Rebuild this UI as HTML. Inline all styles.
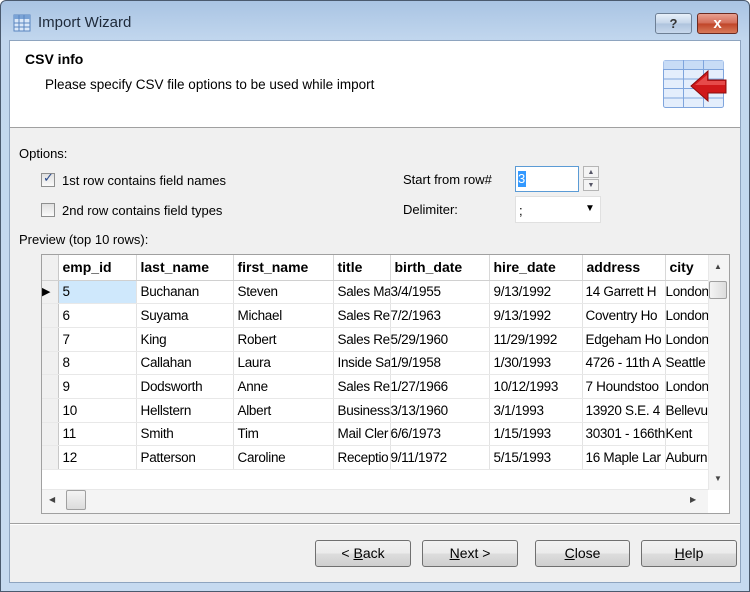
<!DOCTYPE html>
<html><head><style>
*{margin:0;padding:0;box-sizing:border-box}
body{width:750px;height:592px;background:#fff;font-family:"Liberation Sans",sans-serif;font-size:13px;color:#000;position:relative;overflow:hidden}
.abs{position:absolute}
#frame{left:0;top:0;width:750px;height:592px;background:linear-gradient(#a9c4e3,#c2d7ee 40px,#c6daf0);border:1px solid #4a5a6e;border-radius:6px 6px 0 0}
#client{left:9px;top:40px;width:732px;height:543px;background:#f0f0f0;border:1px solid #8ea4bf}
#hdr{left:10px;top:41px;width:730px;height:87px;background:#fff;border-bottom:1px solid #a0a0a0}
.t{position:absolute;white-space:nowrap}
.btn{position:absolute;height:27px;border:1px solid #707070;border-radius:3px;background:linear-gradient(#f2f2f2,#ebebeb 50%,#dddddd 51%,#cfcfcf);text-align:center;line-height:25px;font-size:14px}
.cb{position:absolute;width:14px;height:14px;border:1px solid #8e8f8f;background:linear-gradient(#e0e0e0,#fafafa)}
table{border-collapse:collapse;position:absolute;left:42px;top:255px;table-layout:fixed;width:666px}
td,th{height:23.7px;padding:0 0 0 4px;border-right:1px solid #e3e3e3;border-bottom:1px solid #e8e8e8;overflow:hidden;white-space:nowrap;text-align:left;font-weight:normal;font-size:13.5px;letter-spacing:-0.3px}
th{height:25px;font-weight:bold;font-size:14px;background:#fff;border-right:1px solid #d8d8d8;border-bottom:1px solid #d0d0d0;letter-spacing:0}
td.rh,th.rh{background:#f0f0f0;border-right:1px solid #c8c8c8;padding:0}
</style></head><body>
<div id="frame" class="abs"></div>
<svg class="abs" style="left:13px;top:14px" width="18" height="18"><rect x="1" y="1" width="16" height="16" fill="#dbe8f8" stroke="#5a86c0"/><rect x="1" y="1" width="16" height="4" fill="#7aa3d6"/><path d="M1 9h16M1 13h16M6 1v16M11 1v16" stroke="#5a86c0"/></svg>
<div class="t" style="left:38px;top:14px;font-size:15px;color:#1e2a3a">Import Wizard</div>
<div class="abs" style="left:655px;top:13px;width:37px;height:21px;border:1px solid #6d7f95;border-radius:3px;background:linear-gradient(#e8f0fa,#c3d4e8 50%,#aec3dd 51%,#c7d8ec);text-align:center;font-weight:bold;color:#333;line-height:19px">?</div>
<div class="abs" style="left:697px;top:13px;width:41px;height:21px;border:1px solid #6b2a20;border-radius:3px;background:linear-gradient(#e8a090,#d26a55 50%,#c04428 51%,#d87a5a);text-align:center;font-weight:bold;color:#fff;line-height:19px;font-size:15px">x</div>
<div id="client" class="abs"></div>
<div id="hdr" class="abs"></div>
<div class="t" style="left:25px;top:51px;font-weight:bold;font-size:14px">CSV info</div>
<div class="t" style="left:45px;top:77px;font-size:13.5px">Please specify CSV file options to be used while import</div>
<svg class="abs" style="left:662px;top:59px" width="66" height="50">
<rect x="1.5" y="1.5" width="60" height="47" rx="2" fill="#e4eefc" stroke="#7fa5dd"/>
<rect x="1.5" y="1.5" width="60" height="9" fill="#c8dcf6"/>
<path d="M1.5 10.5h60M1.5 20h60M1.5 29.5h60M1.5 39h60M21.5 1.5v47M41.5 1.5v47" stroke="#7fa5dd"/>
<path d="M29 27 L46 12 L46 21 L64 21 L64 34 L46 34 L46 42 Z" fill="#d0181a" stroke="#8a0c0c"/>
<path d="M33 26 L45 16 L45 22 L63 22 L63 26 Z" fill="#f06060" opacity=".7"/>
</svg>
<div class="t" style="left:19px;top:146px">Options:</div>
<div class="cb" style="left:41px;top:173px"></div><div class="t" style="left:43px;top:170px;font-size:13px;color:#2a4a8a">✓</div>
<div class="t" style="left:62px;top:173px">1st row contains field names</div>
<div class="cb" style="left:41px;top:203px"></div>
<div class="t" style="left:62px;top:203px">2nd row contains field types</div>
<div class="t" style="left:403px;top:172px">Start from row#</div>
<div class="abs" style="left:515px;top:166px;width:64px;height:26px;background:#fff;border:1px solid #5b9bd5"></div>
<div class="abs" style="left:518px;top:171px;width:8px;height:16px;background:#3399ff;color:#fff;line-height:16px">3</div>
<div class="abs" style="left:583px;top:166px;width:16px;height:12px;border:1px solid #b5b5b5;background:#f4f4f4;font-size:7px;text-align:center;color:#556;line-height:11px">▲</div>
<div class="abs" style="left:583px;top:179px;width:16px;height:12px;border:1px solid #b5b5b5;background:#f4f4f4;font-size:7px;text-align:center;color:#556;line-height:11px">▼</div>
<div class="t" style="left:403px;top:202px">Delimiter:</div>
<div class="abs" style="left:515px;top:196px;width:86px;height:27px;background:#fff;border:1px solid #e0e0e0"></div>
<div class="t" style="left:519px;top:203px">;</div>
<div class="t" style="left:585px;top:203px;font-size:10px">▼</div>
<div class="t" style="left:19px;top:232px">Preview (top 10 rows):</div>
<div class="abs" style="left:41px;top:254px;width:689px;height:260px;background:#fff;border:1px solid #a0a0a0"></div>
<table>
<colgroup><col style="width:16px"><col style="width:78px"><col style="width:97px"><col style="width:100px"><col style="width:57px"><col style="width:99px"><col style="width:93px"><col style="width:83px"><col style="width:43px"></colgroup>
<tr><th class="rh"></th><th>emp_id</th><th>last_name</th><th>first_name</th><th>title</th><th>birth_date</th><th>hire_date</th><th>address</th><th>city</th></tr>
<tr><td class="rh" style="font-size:11px">▶</td><td style="background:#cfe8fc">5</td><td>Buchanan</td><td>Steven</td><td>Sales Ma</td><td style="padding:0">3/4/1955</td><td>9/13/1992</td><td style="padding-left:3px">14 Garrett H</td><td style="padding:0">London</td></tr>
<tr><td class="rh"></td><td>6</td><td>Suyama</td><td>Michael</td><td>Sales Re</td><td style="padding:0">7/2/1963</td><td>9/13/1992</td><td style="padding-left:3px">Coventry Ho</td><td style="padding:0">London</td></tr>
<tr><td class="rh"></td><td>7</td><td>King</td><td>Robert</td><td>Sales Re</td><td style="padding:0">5/29/1960</td><td>11/29/1992</td><td style="padding-left:3px">Edgeham Ho</td><td style="padding:0">London</td></tr>
<tr><td class="rh"></td><td>8</td><td>Callahan</td><td>Laura</td><td>Inside Sa</td><td style="padding:0">1/9/1958</td><td>1/30/1993</td><td style="padding-left:3px">4726 - 11th A</td><td style="padding:0">Seattle</td></tr>
<tr><td class="rh"></td><td>9</td><td>Dodsworth</td><td>Anne</td><td>Sales Re</td><td style="padding:0">1/27/1966</td><td>10/12/1993</td><td style="padding-left:3px">7 Houndstoo</td><td style="padding:0">London</td></tr>
<tr><td class="rh"></td><td>10</td><td>Hellstern</td><td>Albert</td><td>Business</td><td style="padding:0">3/13/1960</td><td>3/1/1993</td><td style="padding-left:3px">13920 S.E. 4</td><td style="padding:0">Bellevue</td></tr>
<tr><td class="rh"></td><td>11</td><td>Smith</td><td>Tim</td><td>Mail Cler</td><td style="padding:0">6/6/1973</td><td>1/15/1993</td><td style="padding-left:3px">30301 - 166th</td><td style="padding:0">Kent</td></tr>
<tr><td class="rh"></td><td>12</td><td>Patterson</td><td>Caroline</td><td>Receptio</td><td style="padding:0">9/11/1972</td><td>5/15/1993</td><td style="padding-left:3px">16 Maple Lar</td><td style="padding:0">Auburn</td></tr>
</table>
<div class="abs" style="left:708px;top:255px;width:21px;height:235px;background:#f4f4f4;border-left:1px solid #e8e8e8"></div>
<div class="t" style="left:714px;top:262px;font-size:8px;color:#444">▲</div>
<div class="abs" style="left:709px;top:281px;width:18px;height:18px;border:1px solid #a0a0a0;border-radius:2px;background:linear-gradient(90deg,#f4f4f4,#dcdcdc)"></div>
<div class="t" style="left:714px;top:474px;font-size:8px;color:#444">▼</div>
<div class="abs" style="left:42px;top:489px;width:666px;height:24px;background:#f4f4f4;border-top:1px solid #e8e8e8"></div>
<div class="t" style="left:49px;top:495px;font-size:8px;color:#444">◀</div>
<div class="abs" style="left:66px;top:490px;width:20px;height:20px;border:1px solid #a0a0a0;border-radius:2px;background:linear-gradient(#f4f4f4,#dcdcdc)"></div>
<div class="t" style="left:690px;top:495px;font-size:8px;color:#444">▶</div>
<div class="abs" style="left:10px;top:523px;width:730px;height:2px;border-top:1px solid #a0a0a0;border-bottom:1px solid #fff"></div>
<div class="btn" style="left:315px;top:540px;width:96px">&lt; <u>B</u>ack</div>
<div class="btn" style="left:422px;top:540px;width:96px"><u>N</u>ext &gt;</div>
<div class="btn" style="left:535px;top:540px;width:95px"><u>C</u>lose</div>
<div class="btn" style="left:641px;top:540px;width:96px"><u>H</u>elp</div>
</body></html>
